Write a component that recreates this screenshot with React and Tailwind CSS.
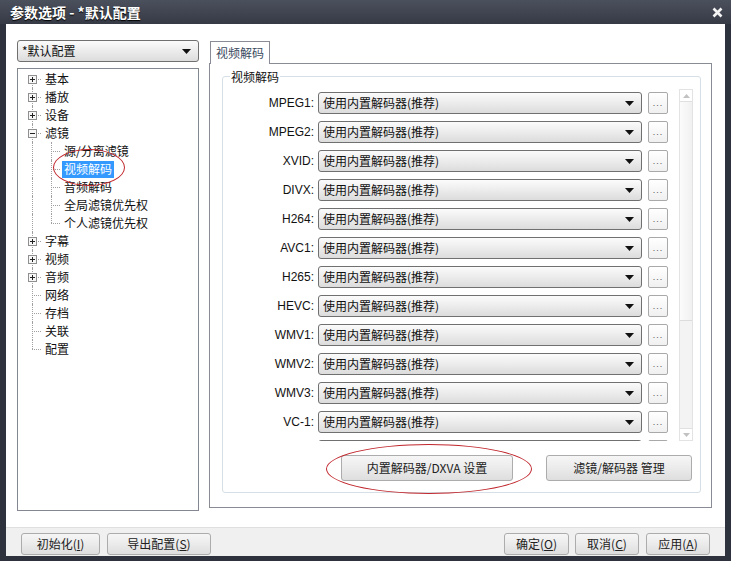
import React from 'react';

const cjk = { fontFamily: '"Noto Sans CJK SC", "Noto Sans", sans-serif' };
const latin = { fontFamily: '"Liberation Sans", "Noto Sans CJK SC", sans-serif' };

const codecs = ['MPEG1', 'MPEG2', 'XVID', 'DIVX', 'H264', 'AVC1', 'H265', 'HEVC', 'WMV1', 'WMV2', 'WMV3', 'VC-1'];

const tree = [
    { label: '基本', box: '+' },
    { label: '播放', box: '+' },
    { label: '设备', box: '+' },
    { label: '滤镜', box: '-' },
    { label: '源/分离滤镜', child: true },
    { label: '视频解码', child: true, selected: true },
    { label: '音频解码', child: true },
    { label: '全局滤镜优先权', child: true },
    { label: '个人滤镜优先权', child: true, lastChild: true },
    { label: '字幕', box: '+' },
    { label: '视频', box: '+' },
    { label: '音频', box: '+' },
    { label: '网络' },
    { label: '存档' },
    { label: '关联' },
    { label: '配置', last: true },
];

const Arrow = () => (
    <svg width="9" height="5" viewBox="0 0 9 5" className="shrink-0">
        <path d="M0 0H9L4.5 5Z" fill="#111" />
    </svg>
);

const PlusBox = ({ sign }) => (
    <svg width="9" height="9" viewBox="0 0 9 9" className="relative z-10 bg-white">
        <rect x="0.5" y="0.5" width="8" height="8" fill="#f7f7f7" stroke="#8e8f8f" />
        <path d="M2 4.5H7" stroke="#222" />
        {sign === '+' && <path d="M4.5 2V7" stroke="#222" />}
    </svg>
);

const Combo = ({ text, className = '' }) => (
    <div className={`h-[22px] shrink-0 flex items-center justify-between pl-[4px] pr-[7px] border border-[#707070] rounded-[3px] bg-[linear-gradient(to_bottom,#fbfbfb,#ececec_50%,#dcdcdc)] text-[12px] text-[#111] ${className}`} style={cjk}>
        <span className="leading-none">{text}</span>
        <Arrow />
    </div>
);

const DotsButton = () => (
    <button className="ml-[6px] w-[20px] h-[22px] shrink-0 border border-[#a9a9a9] rounded-[2px] bg-[linear-gradient(to_bottom,#ffffff,#f0f0f0)] flex items-end justify-center pb-[5px]">
        <span className="text-[9px] leading-none text-[#555] tracking-[1px]" style={latin}>...</span>
    </button>
);

const TreeRow = ({ item, first }) => (
    <div className="h-[18px] flex items-center">
        {/* top-level connector column */}
        <div className="relative w-[18px] h-full flex items-center justify-center ml-[5px]">
            {!item.last && (
                <span className={`absolute left-[9px] border-l border-dotted border-[#a0a0a0] ${first ? 'top-[9px] bottom-0' : 'top-0 bottom-0'}`} />
            )}
            {item.last && <span className="absolute left-[9px] top-0 h-[9px] border-l border-dotted border-[#a0a0a0]" />}
            {!item.child && <span className="absolute left-[9px] right-0 top-[9px] border-t border-dotted border-[#a0a0a0]" />}
            {item.box && <PlusBox sign={item.box} />}
        </div>
        {item.child && (
            <div className="relative w-[18px] h-full ml-[1px]">
                <span className={`absolute left-[9px] top-0 border-l border-dotted border-[#a0a0a0] ${item.lastChild ? 'h-[9px]' : 'bottom-0'}`} />
                <span className="absolute left-[9px] right-0 top-[9px] border-t border-dotted border-[#a0a0a0]" />
            </div>
        )}
        <span
            className={`ml-[2px] px-[2px] h-[17px] flex items-center text-[12px] leading-none ${item.selected ? 'bg-[#3399ff] text-white' : 'text-[#111]'}`}
            style={cjk}
        >
            {item.label}
        </span>
    </div>
);

const Button = ({ children, className = '' }) => (
    <button className={`flex items-center justify-center border border-[#acacac] rounded-[3px] bg-[linear-gradient(to_bottom,#f6f6f6,#ebebeb_50%,#dedede)] text-[12px] text-[#222] ${className}`} style={cjk}>
        {children}
    </button>
);

export default function App() {
    return (
        <div className="w-[731px] h-[561px] flex flex-col bg-[#2e323c] overflow-hidden">
            {/* title bar */}
            <div className="h-[24px] shrink-0 flex items-center justify-between pl-[10px] pr-[8px] bg-[linear-gradient(to_bottom,#4b505d,#363a45)]">
                <span className="text-[14px] font-bold text-white [text-shadow:0_1px_1px_#000]" style={cjk}>参数选项 - *默认配置</span>
                <svg width="11" height="11" viewBox="0 0 11 11">
                    <path d="M1.5 1.5L9.5 9.5M9.5 1.5L1.5 9.5" stroke="#f4f4f4" strokeWidth="2.6" />
                </svg>
            </div>

            {/* client area */}
            <div className="flex-1 mx-[6px] mb-[5px] flex flex-col bg-white relative">
                <div className="flex-1 flex pl-[11px] pr-[13px] pt-[16px] pb-[16px] gap-[10px]">
                    {/* left column */}
                    <div className="w-[182px] shrink-0 flex flex-col gap-[6px]">
                        <Combo text="*默认配置" />
                        <div className="flex-1 border border-[#828790] pt-[1px] relative">
                            {tree.map((item, i) => (
                                <TreeRow key={item.label} item={item} first={i === 0} />
                            ))}
                            {/* annotation */}
                            <div className="absolute left-[35px] top-[80px] w-[72px] h-[37px] rounded-[50%] border border-[#c0272d] pointer-events-none" />
                        </div>
                    </div>

                    {/* right column */}
                    <div className="flex-1 min-w-0 flex flex-col">
                        <div className="flex">
                            <div className="ml-[1px] h-[23px] px-[5px] flex items-center border border-b-0 border-[#898c95] bg-white text-[12px] text-[#3a4a5e] relative top-[1px] z-10" style={cjk}>
                                视频解码
                            </div>
                        </div>
                        <div className="flex-1 border border-[#898c95] mb-[3px] px-[12px] pt-[12px] pb-[14px] flex">
                            {/* group box */}
                            <div className="flex-1 relative border border-[#d5dfe5] rounded-[3px] flex flex-col">
                                <span className="absolute left-[7px] top-[-8px] px-[1px] bg-white text-[12px] leading-[15px] text-[#111]" style={cjk}>视频解码</span>
                                <div className="h-[354px] mt-[10px] flex">
                                    <div className="flex-1 min-w-0 overflow-hidden pt-[5px] flex flex-col gap-[7px]">
                                        {codecs.map((c) => (
                                            <div key={c} className="flex items-center shrink-0">
                                                <span className="w-[95px] shrink-0 pr-[4px] text-right text-[12px] text-[#111]" style={latin}>{c}:</span>
                                                <Combo text="使用内置解码器(推荐)" className="w-[324px]" />
                                                <DotsButton />
                                            </div>
                                        ))}
                                        {/* partly scrolled-in row */}
                                        <div className="flex items-center shrink-0">
                                            <span className="w-[95px] shrink-0" />
                                            <div className="w-[324px] h-[22px] shrink-0 border border-[#707070] rounded-[3px] bg-[#fbfbfb]" />
                                            <div className="ml-[6px] w-[20px] h-[22px] shrink-0 border border-[#a9a9a9] rounded-[2px] bg-white" />
                                        </div>
                                    </div>
                                    {/* scrollbar */}
                                    <div className="w-[14px] shrink-0 ml-[11px] mr-[7px] mt-[2px] border border-[#e3e3e3] bg-[#f3f3f3] flex flex-col">
                                        <div className="h-[12px] flex items-center justify-center border-b border-[#e0e0e0] bg-white">
                                            <svg width="7" height="4" viewBox="0 0 7 4"><path d="M0 4H7L3.5 0Z" fill="#c2c2c2" /></svg>
                                        </div>
                                        <div className="h-[219px] border-b border-[#dcdcdc] bg-[linear-gradient(to_right,#fbfbfb,#f1f1f1)]" />
                                        <div className="flex-1" />
                                        <div className="h-[12px] flex items-center justify-center border-t border-[#e0e0e0] bg-white">
                                            <svg width="7" height="4" viewBox="0 0 7 4"><path d="M0 0H7L3.5 4Z" fill="#c2c2c2" /></svg>
                                        </div>
                                    </div>
                                </div>
                                <div className="flex mt-[14px] relative">
                                    <Button className="ml-[118px] w-[172px] h-[26px]">内置解码器/DXVA 设置</Button>
                                    <Button className="ml-[33px] w-[146px] h-[26px]">滤镜/解码器 管理</Button>
                                    {/* annotation */}
                                    <div className="absolute left-[103px] top-[-11px] w-[206px] h-[50px] rounded-[50%] border border-[#c0272d] pointer-events-none" />
                                </div>
                            </div>
                        </div>
                    </div>
                </div>

                {/* footer */}
                <div className="h-[29px] shrink-0 border-t border-[#dfdfdf] bg-[#f0f0f0] flex items-start pt-[5px] pl-[15px] pr-[15px]">
                    <Button className="w-[79px] h-[22px]">初始化(<u>I</u>)</Button>
                    <Button className="ml-[7px] w-[104px] h-[22px]">导出配置(<u>S</u>)</Button>
                    <div className="flex-1" />
                    <Button className="w-[65px] h-[22px]">确定(<u>O</u>)</Button>
                    <Button className="ml-[6px] w-[64px] h-[22px]">取消(<u>C</u>)</Button>
                    <Button className="ml-[7px] w-[64px] h-[22px]">应用(<u>A</u>)</Button>
                </div>
            </div>
        </div>
    );
}
